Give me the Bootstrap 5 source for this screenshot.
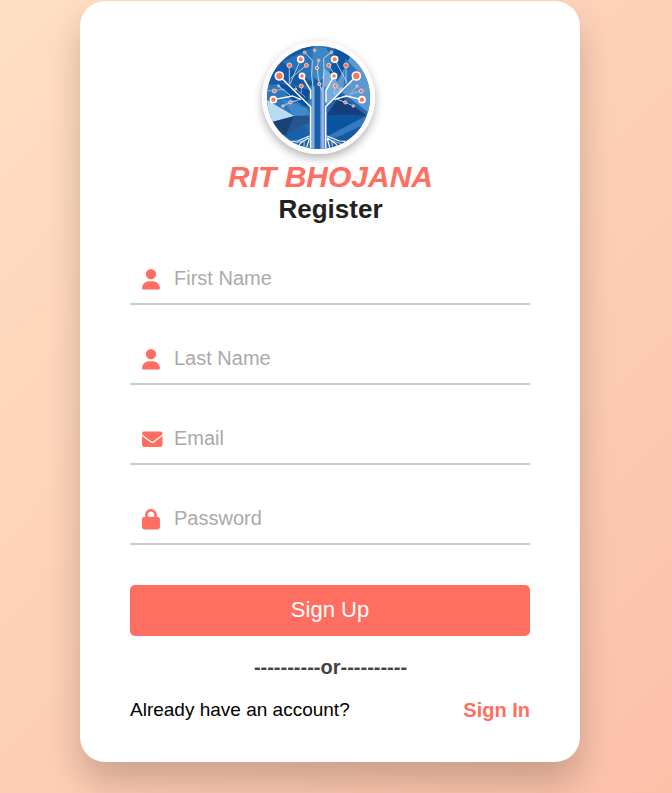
<!DOCTYPE html>
<html lang="en">
<head>
<meta charset="utf-8">
<meta name="viewport" content="width=device-width, initial-scale=1">
<title>Register</title>
<link href="https://cdn.jsdelivr.net/npm/bootstrap@5.3.0/dist/css/bootstrap.min.css" rel="stylesheet">
<style>
:root{--coral:#ff6f61}
body{font-family:"Liberation Sans",Arial,sans-serif;height:793px;overflow:hidden;background:linear-gradient(135deg,#ffdfc4,#fcc0a9)}
.register-card{width:500px;height:761px;margin:1px 0 0 80px;padding:40px 50px 0;border-radius:25px;box-shadow:0 20px 35px rgba(0,0,0,.2)}
.logo{width:113px;height:113px;margin-right:23px;border:5px solid #fdfbfc;box-shadow:0 4px 10px rgba(0,0,0,.3)}
.brand{font-size:30px;line-height:34px;margin-top:6px;padding-left:1px;color:var(--coral)}
.heading{font-size:26px;line-height:30px;padding-left:1px;color:#222}
.fields{padding-top:11px}
.field{height:42px;margin-bottom:38px;padding-left:12px;border-bottom:2px solid #ccc}
.field svg{width:20.5px;height:20.5px;margin-top:6.4px;margin-right:11.5px;fill:var(--coral);flex:none}
.field input{height:30px;font-size:20px;line-height:30px;border-radius:0;color:#222}
.field input::placeholder{color:#aaa;opacity:1}
.btn-coral{height:51px;margin-top:40px;padding:0 0 3px;font-size:22px;border:0;border-radius:5px;background:var(--coral);color:#fff}
.btn-coral:hover{background:#e85f52;color:#fff}
.divider{font-size:20px;line-height:24px;margin-top:19px;padding-left:1px;color:#444}
.prompt-row{margin-top:19px}
.prompt{font-size:19px;line-height:24px;color:#000}
.sign-in{font-size:20px;line-height:24px;color:var(--coral)}
</style>
</head>
<body>
<main class="register-card bg-white">
  <header class="d-flex flex-column align-items-center">
    <svg class="logo rounded-circle" viewBox="36 33 309 309" role="img" aria-label="RIT Bhojana logo">
      <rect x="30" y="30" width="320" height="320" fill="#2468ad"/>
      <path d="M30 30H190V150H30z" fill="#1459a5"/>
      <path d="M80 80L190 30L178 145L125 110z" fill="#2873b8"/>
      <path d="M175 30L215 40L245 100L205 155L170 120z" fill="#3f86c4"/>
      <path d="M240 35L292 50L275 145L225 115z" fill="#0d559e"/>
      <path d="M292 50L350 110V240L240 155z" fill="#5e98ce"/>
      <path d="M270 70L310 110L265 170z" fill="#2e74b9"/>
      <path d="M208 100L240 130L262 170L215 210L195 160z" fill="#78a9df"/>
      <path d="M36 150L90 145L150 195L117 243L36 210z" fill="#2d77bd"/>
      <path d="M70 145L165 165L155 215L105 190z" fill="#0b4f9c"/>
      <path d="M36 195L118 243L50 262L34 240z" fill="#b8dcf4"/>
      <path d="M118 243L80 192L155 220L165 242z" fill="#3d8acc"/>
      <path d="M48 262L118 243L92 303L70 290z" fill="#184176"/>
      <path d="M118 243L206 240L140 274L92 303z" fill="#25568f"/>
      <path d="M92 303L148 274L175 313L130 340z" fill="#1760aa"/>
      <path d="M60 283L92 303L140 345H80z" fill="#367fc1"/>
      <path d="M215 240L255 180L334 242z" fill="#143f7b"/>
      <path d="M215 240L334 242L215 305z" fill="#0b559f"/>
      <path d="M215 305L334 242L320 290L250 305z" fill="#327bc0"/>
      <path d="M250 305L325 270L290 345H220z" fill="#17589f"/>
      <path d="M164 155H214V343H164z" fill="#4d87c6"/>
      <path d="M180 150L205 130V343H180z" fill="#1760aa"/>
      <path d="M196 157H206V343H196z" fill="#7c9ddb"/>
      <g fill="none" stroke="#fff" stroke-linejoin="round" stroke-linecap="round">
        <path d="M167 342V215L73 123M167 190V167L141 123M212 342V215L304 123M213 200V166L237 123" stroke-width="4.5"/>
        <path d="M174 342V157L170 120L172 76L149 52M204 342V150L207 110L206 70L229 52" stroke-width="2.5" stroke="#d7e8f7"/>
        <path d="M55 194L113 183L137 193M321 194L273 183L240 193" stroke-width="4"/>
        <path d="M103 91V145M103 153L137 73M107 130L154 91M273 91V145M275 141L239 73M245 129L221 91" stroke-width="2.5" stroke="#c8def2"/>
        <path d="M71 153L85 166M39 168L86 163L105 181M71 153L105 181M306 153L281 184M319 168L290 176M139 153V175L151 187M122 162L139 176M241 153L237 176M258 162L238 178" stroke-width="2" stroke="#b6d2eb"/>
        <path d="M84 213L106 202L137 193M295 213L271 202L247 193M191 77L186 99L193 147L200 166" stroke-width="2.5" stroke="#c9dff2"/>
        <path d="M163 303L128 318L98 320M160 309L137 324L128 336M163 311L155 337M216 303L253 318L278 320M218 309L242 326L250 337M217 311L225 340" stroke-width="3.5"/>
        <path d="M146 317L115 326M148 321L146 342M233 317L262 328M230 321L235 342" stroke-width="2"/>
      </g>
      <g fill="#f7795a" stroke="#fff" stroke-width="5">
        <circle cx="73" cy="123" r="12"/><circle cx="304" cy="123" r="12"/>
        <circle cx="137" cy="73" r="9"/><circle cx="239" cy="73" r="9"/>
        <circle cx="55" cy="194" r="9"/><circle cx="321" cy="194" r="9"/>
        <circle cx="141" cy="123" r="8"/><circle cx="237" cy="123" r="8"/>
      </g>
      <g fill="#f5704f" stroke="#f0e5e7" stroke-width="2.5">
        <circle cx="103" cy="91" r="7"/><circle cx="273" cy="91" r="7"/>
        <circle cx="154" cy="91" r="6"/><circle cx="221" cy="91" r="6"/>
        <circle cx="58" cy="168" r="6"/><circle cx="319" cy="168" r="6"/>
        <circle cx="139" cy="153" r="6"/><circle cx="241" cy="153" r="6"/>
        <circle cx="106" cy="202" r="5"/><circle cx="271" cy="202" r="5"/>
        <circle cx="149" cy="52" r="4"/><circle cx="229" cy="52" r="4"/>
        <circle cx="186" cy="99" r="5"/><circle cx="193" cy="147" r="5"/>
      </g>
      <g fill="#e98d80" stroke="#dce7f3" stroke-width="2">
        <circle cx="71" cy="153" r="3.5"/><circle cx="306" cy="153" r="3.5"/>
        <circle cx="122" cy="162" r="3.5"/><circle cx="258" cy="162" r="3.5"/>
        <circle cx="84" cy="213" r="4"/><circle cx="295" cy="213" r="4"/>
        <circle cx="179" cy="46" r="4"/><circle cx="191" cy="76" r="4"/>
      </g>
    </svg>
    <div class="brand fw-bold fst-italic">RIT BHOJANA</div>
    <h1 class="heading fw-bold mb-0">Register</h1>
  </header>

  <form class="pt-1 mt-4">
    <div class="fields">
      <label class="field d-flex align-items-start">
        <svg viewBox="0 0 512 512"><path d="M224 256A128 128 0 1 0 224 0a128 128 0 1 0 0 256zm-45.700 48C79.800 304 0 383.800 0 482.300 0 498.700 13.300 512 29.700 512h388.600c16.400 0 29.700-13.300 29.700-29.700C448 383.800 368.200 304 269.700 304z"/></svg>
        <input class="form-control-plaintext p-0" type="text" placeholder="First Name">
      </label>
      <label class="field d-flex align-items-start">
        <svg viewBox="0 0 512 512"><path d="M224 256A128 128 0 1 0 224 0a128 128 0 1 0 0 256zm-45.700 48C79.800 304 0 383.800 0 482.300 0 498.700 13.300 512 29.700 512h388.600c16.400 0 29.700-13.300 29.700-29.700C448 383.800 368.200 304 269.700 304z"/></svg>
        <input class="form-control-plaintext p-0" type="text" placeholder="Last Name">
      </label>
      <label class="field d-flex align-items-start">
        <svg viewBox="0 0 512 512"><path d="M48 64C21.500 64 0 85.500 0 112c0 15.100 7.100 29.300 19.200 38.400l217.600 163.200c11.400 8.500 27 8.500 38.400 0l217.600-163.200c12.100-9.100 19.200-23.300 19.200-38.400 0-26.500-21.500-48-48-48zM0 176v208c0 35.300 28.700 64 64 64h384c35.300 0 64-28.700 64-64V176L294.400 339.200c-22.800 17.100-54 17.100-76.800 0z"/></svg>
        <input class="form-control-plaintext p-0" type="email" placeholder="Email">
      </label>
      <label class="field d-flex align-items-start mb-0">
        <svg viewBox="0 0 512 512"><path d="M144 144v48h160v-48c0-44.200-35.800-80-80-80s-80 35.800-80 80zM80 192v-48C80 64.500 144.500 0 224 0s144 64.500 144 144v48h16c35.300 0 64 28.700 64 64v192c0 35.300-28.700 64-64 64H64c-35.300 0-64-28.700-64-64V256c0-35.300 28.700-64 64-64z"/></svg>
        <input class="form-control-plaintext p-0" type="password" placeholder="Password">
      </label>
    </div>
    <button class="btn btn-coral w-100 d-block" type="button">Sign Up</button>
  </form>

  <p class="divider fw-bold text-center mb-0">----------or----------</p>
  <div class="prompt-row d-flex justify-content-between align-items-center">
    <span class="prompt">Already have an account?</span>
    <a class="sign-in fw-bold text-decoration-none" href="#">Sign In</a>
  </div>
</main>
<script src="https://cdn.jsdelivr.net/npm/bootstrap@5.3.0/dist/js/bootstrap.bundle.min.js"></script>
</body>
</html>
